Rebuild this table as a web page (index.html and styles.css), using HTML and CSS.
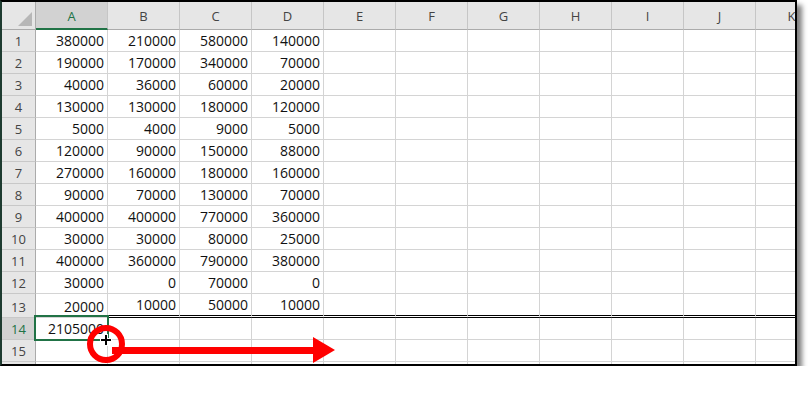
FILE: index.html
```html
<!DOCTYPE html>
<html lang="en">
<head>
    <meta charset="UTF-8">
    <title>Sheet1</title>
    <link rel="stylesheet" href="styles.css">
</head>
<body>
    <div class="window">
        <div class="sheet">
            <!-- column letters -->
            <div class="row head">
                <div class="corner"><span class="tri"></span></div>
                <div class="col-head sel">A</div>
                <div class="col-head">B</div>
                <div class="col-head">C</div>
                <div class="col-head">D</div>
                <div class="col-head">E</div>
                <div class="col-head">F</div>
                <div class="col-head">G</div>
                <div class="col-head">H</div>
                <div class="col-head">I</div>
                <div class="col-head">J</div>
                <div class="col-head">K</div>
            </div>

            <div class="row"><div class="row-head">1</div><div class="cell">380000</div><div class="cell">210000</div><div class="cell">580000</div><div class="cell">140000</div><div class="cell"></div><div class="cell"></div><div class="cell"></div><div class="cell"></div><div class="cell"></div><div class="cell"></div><div class="cell"></div></div>
            <div class="row"><div class="row-head">2</div><div class="cell">190000</div><div class="cell">170000</div><div class="cell">340000</div><div class="cell">70000</div><div class="cell"></div><div class="cell"></div><div class="cell"></div><div class="cell"></div><div class="cell"></div><div class="cell"></div><div class="cell"></div></div>
            <div class="row"><div class="row-head">3</div><div class="cell">40000</div><div class="cell">36000</div><div class="cell">60000</div><div class="cell">20000</div><div class="cell"></div><div class="cell"></div><div class="cell"></div><div class="cell"></div><div class="cell"></div><div class="cell"></div><div class="cell"></div></div>
            <div class="row"><div class="row-head">4</div><div class="cell">130000</div><div class="cell">130000</div><div class="cell">180000</div><div class="cell">120000</div><div class="cell"></div><div class="cell"></div><div class="cell"></div><div class="cell"></div><div class="cell"></div><div class="cell"></div><div class="cell"></div></div>
            <div class="row"><div class="row-head">5</div><div class="cell">5000</div><div class="cell">4000</div><div class="cell">9000</div><div class="cell">5000</div><div class="cell"></div><div class="cell"></div><div class="cell"></div><div class="cell"></div><div class="cell"></div><div class="cell"></div><div class="cell"></div></div>
            <div class="row"><div class="row-head">6</div><div class="cell">120000</div><div class="cell">90000</div><div class="cell">150000</div><div class="cell">88000</div><div class="cell"></div><div class="cell"></div><div class="cell"></div><div class="cell"></div><div class="cell"></div><div class="cell"></div><div class="cell"></div></div>
            <div class="row"><div class="row-head">7</div><div class="cell">270000</div><div class="cell">160000</div><div class="cell">180000</div><div class="cell">160000</div><div class="cell"></div><div class="cell"></div><div class="cell"></div><div class="cell"></div><div class="cell"></div><div class="cell"></div><div class="cell"></div></div>
            <div class="row"><div class="row-head">8</div><div class="cell">90000</div><div class="cell">70000</div><div class="cell">130000</div><div class="cell">70000</div><div class="cell"></div><div class="cell"></div><div class="cell"></div><div class="cell"></div><div class="cell"></div><div class="cell"></div><div class="cell"></div></div>
            <div class="row"><div class="row-head">9</div><div class="cell">400000</div><div class="cell">400000</div><div class="cell">770000</div><div class="cell">360000</div><div class="cell"></div><div class="cell"></div><div class="cell"></div><div class="cell"></div><div class="cell"></div><div class="cell"></div><div class="cell"></div></div>
            <div class="row"><div class="row-head">10</div><div class="cell">30000</div><div class="cell">30000</div><div class="cell">80000</div><div class="cell">25000</div><div class="cell"></div><div class="cell"></div><div class="cell"></div><div class="cell"></div><div class="cell"></div><div class="cell"></div><div class="cell"></div></div>
            <div class="row"><div class="row-head">11</div><div class="cell">400000</div><div class="cell">360000</div><div class="cell">790000</div><div class="cell">380000</div><div class="cell"></div><div class="cell"></div><div class="cell"></div><div class="cell"></div><div class="cell"></div><div class="cell"></div><div class="cell"></div></div>
            <div class="row"><div class="row-head">12</div><div class="cell">30000</div><div class="cell">0</div><div class="cell">70000</div><div class="cell">0</div><div class="cell"></div><div class="cell"></div><div class="cell"></div><div class="cell"></div><div class="cell"></div><div class="cell"></div><div class="cell"></div></div>
            <!-- totals go below the double rule -->
            <div class="row ruled"><div class="row-head">13</div><div class="cell">20000</div><div class="cell rule">10000</div><div class="cell rule">50000</div><div class="cell rule">10000</div><div class="cell rule"></div><div class="cell rule"></div><div class="cell rule"></div><div class="cell rule"></div><div class="cell rule"></div><div class="cell rule"></div><div class="cell rule"></div></div>
            <div class="row"><div class="row-head sel">14</div><div class="cell">2105000</div><div class="cell"></div><div class="cell"></div><div class="cell"></div><div class="cell"></div><div class="cell"></div><div class="cell"></div><div class="cell"></div><div class="cell"></div><div class="cell"></div><div class="cell"></div></div>
            <div class="row"><div class="row-head">15</div><div class="cell"></div><div class="cell"></div><div class="cell"></div><div class="cell"></div><div class="cell"></div><div class="cell"></div><div class="cell"></div><div class="cell"></div><div class="cell"></div><div class="cell"></div><div class="cell"></div></div>
            <!-- next row, only its top edge shows -->
            <div class="row"><div class="row-head"></div><div class="cell"></div><div class="cell"></div><div class="cell"></div><div class="cell"></div><div class="cell"></div><div class="cell"></div><div class="cell"></div><div class="cell"></div><div class="cell"></div><div class="cell"></div><div class="cell"></div></div>
        </div>

        <!-- active cell A14 -->
        <div class="active-cell"></div>

        <!-- drag hint: ring on the fill handle and arrow to the right -->
        <svg class="marks" width="808" height="393" viewBox="0 0 808 393">
            <rect x="112" y="347" width="203" height="7" fill="#ff0000"/>
            <polygon points="313,337 335,350 313,363" fill="#ff0000"/>
            <circle cx="106" cy="344" r="16" fill="none" stroke="#ff0000" stroke-width="6"/>
            <path d="M106 334v12M100 340h12" stroke="#fff" stroke-width="4"/>
            <path d="M106 335v10M101 340h10" stroke="#000" stroke-width="2"/>
        </svg>
    </div>
</body>
</html>
```

FILE: styles.css
```css
body {
    margin: 0;
    background-color: #ffffff;
    font-family: 'Open Sans', 'Noto Sans', sans-serif;
}

.window {
    position: relative;
    width: 797px;
    height: 366px;
    box-sizing: border-box;
    border: 2px solid #000;
    border-left-color: #1e3b30;
    background-color: #fff;
    box-shadow: 5px 5px 5px rgba(0, 0, 0, 0.5);
}

.sheet {
    width: 100%;
    height: 100%;
    overflow: hidden;
}

.row {
    display: flex;
    height: 22px;
}

.row.head {
    height: 28px;
}

.row.ruled {
    height: 24px;
}

.corner {
    position: relative;
    flex: 0 0 34px;
    box-sizing: border-box;
    background-color: #e6e6e6;
    border-right: 1px solid #ababab;
    border-bottom: 1px solid #ababab;
}

.tri {
    position: absolute;
    right: 3px;
    bottom: 3px;
    width: 0;
    height: 0;
    border-left: 14px solid transparent;
    border-bottom: 14px solid #b7b7b7;
}

.col-head {
    flex: 0 0 72px;
    box-sizing: border-box;
    display: flex;
    align-items: center;
    justify-content: center;
    background-color: #e6e6e6;
    border-right: 1px solid #c6c6c6;
    border-bottom: 1px solid #ababab;
    color: #444;
    font-size: 13px;
    padding-top: 1px;
}

.col-head.sel {
    background-color: #d2d2d2;
    border-bottom: 2px solid #217346;
    color: #217346;
}

.row-head {
    flex: 0 0 34px;
    box-sizing: border-box;
    display: flex;
    align-items: center;
    justify-content: center;
    background-color: #e6e6e6;
    border-right: 1px solid #ababab;
    border-bottom: 1px solid #c8c8c8;
    color: #444;
    font-size: 13px;
    padding-top: 1px;
}

.row-head.sel {
    background-color: #d2d2d2;
    color: #217346;
}

.cell {
    flex: 0 0 72px;
    box-sizing: border-box;
    display: flex;
    align-items: flex-end;
    justify-content: flex-end;
    padding: 0 3px 1px 0;
    border-right: 1px solid #d4d4d4;
    border-bottom: 1px solid #d4d4d4;
    color: #111;
    font-size: 14px;
    line-height: 19px;
}

.cell.rule {
    border-bottom: 3px double #000;
}

.ruled .cell,
.ruled .row-head {
    padding-top: 2px;
}

.active-cell {
    position: absolute;
    left: 32px;
    top: 313px;
    width: 75px;
    height: 26px;
    box-sizing: border-box;
    border: 2px solid #217346;
}

.marks {
    position: absolute;
    left: -2px;
    top: -2px;
    pointer-events: none;
}
```
